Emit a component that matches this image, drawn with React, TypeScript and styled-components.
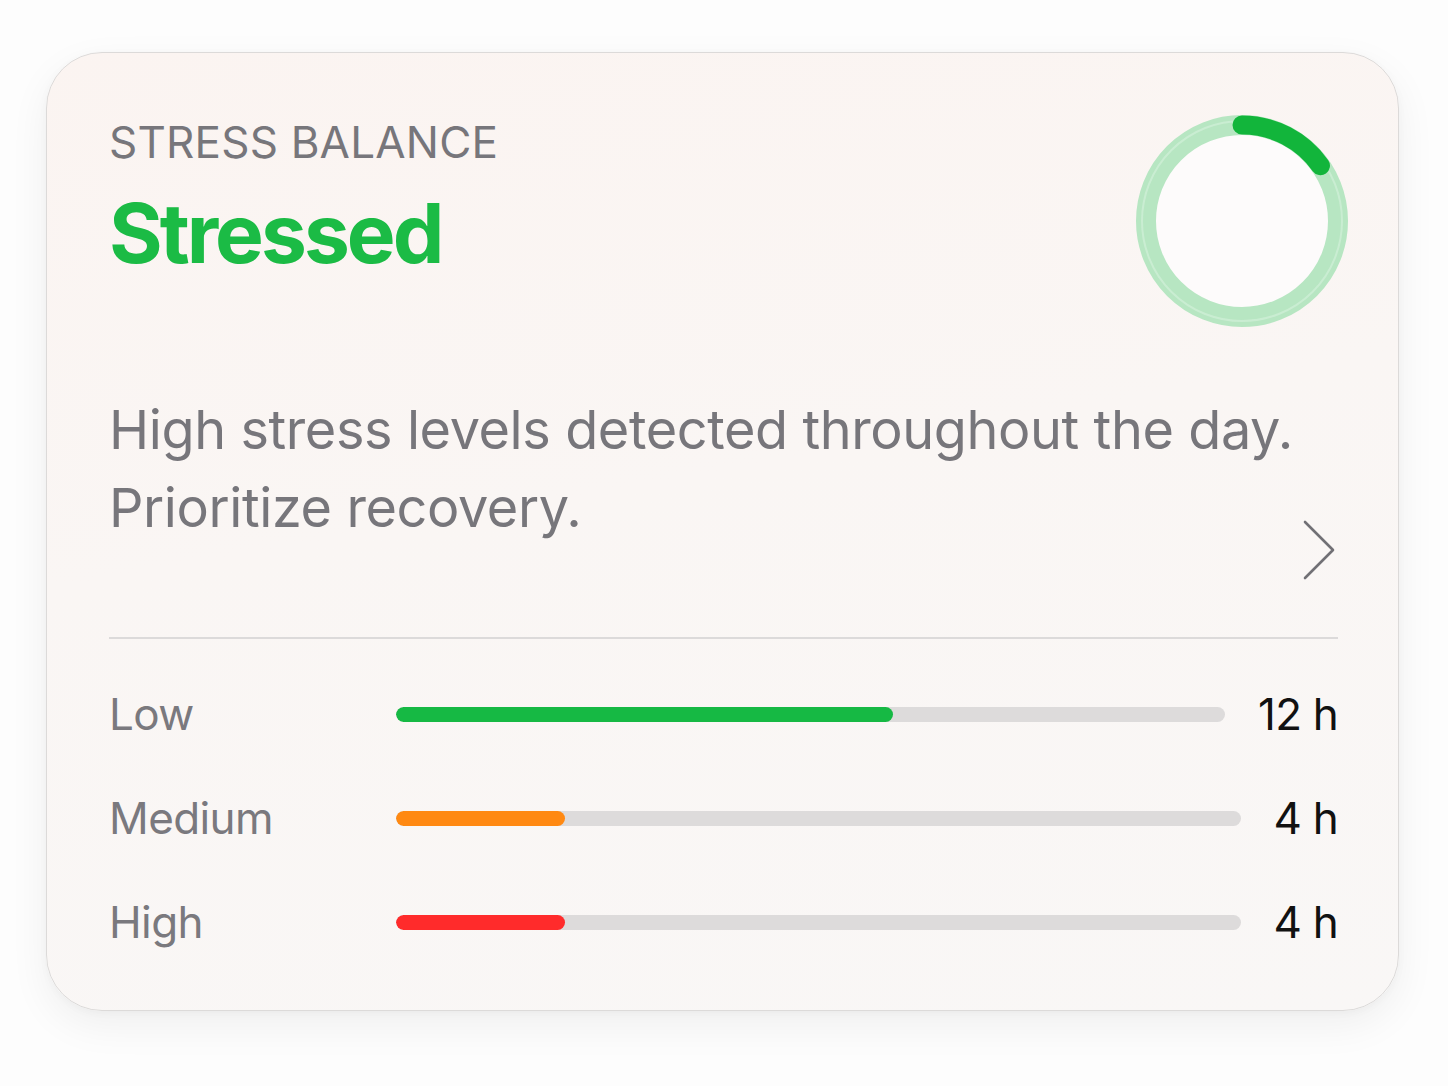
import styled, { createGlobalStyle } from 'styled-components';

const GlobalStyle = createGlobalStyle`
	html, body {
		margin: 0;
		padding: 0;
		background: #fdfdfd;
	}
	body {
		font-family: Inter, 'Noto Sans', 'Liberation Sans', sans-serif;
		-webkit-font-smoothing: antialiased;
	}
`;

type Level = {
	label: string;
	hours: number;
	color: string;
};

const levels: Level[] = [
	{ label: 'Low', hours: 12, color: '#16b944' },
	{ label: 'Medium', hours: 4, color: '#ff8912' },
	{ label: 'High', hours: 4, color: '#ff2b2b' },
];

const TOTAL_HOURS = 20;

function StressRing({ progress }: { progress: number }) {
	const r = 96;
	const c = 2 * Math.PI * r;
	const start = -0.008;
	return (
		<RingSvg width="216" height="216" viewBox="0 0 216 216">
			<circle cx="108" cy="108" r={r} fill="#fdfbfb" stroke="#b7e6c2" strokeWidth="20" />
			<circle cx="108" cy="108" r={r + 4} fill="none" stroke="#d6f2dc" strokeWidth="2" opacity="0.6" />
			<circle
				cx="108"
				cy="108"
				r={r}
				fill="none"
				stroke="#12b53b"
				strokeWidth="19"
				strokeLinecap="round"
				strokeDasharray={`${c * progress} ${c}`}
				strokeDashoffset={-c * start}
				transform="rotate(-90 108 108)"
			/>
		</RingSvg>
	);
}

function Chevron() {
	return (
		<ChevronSvg width="34" height="64" viewBox="0 0 34 64">
			<path d="M3 3 L31 31 L3 59" fill="none" stroke="#717075" strokeWidth="2.6" strokeLinecap="round" strokeLinejoin="round" />
		</ChevronSvg>
	);
}

export default function App() {
	return (
		<>
			<GlobalStyle />
			<Page>
				<Card>
					<Header>
						<TitleBlock>
							<Eyebrow>STRESS BALANCE</Eyebrow>
							<Status>Stressed</Status>
						</TitleBlock>
						<StressRing progress={0.16} />
					</Header>
					<SummaryRow>
						<Summary>
							High stress levels detected throughout the day.
							<br />
							Prioritize recovery.
						</Summary>
						<Chevron />
					</SummaryRow>
					<Divider />
					<Levels>
						{levels.map((l) => (
							<LevelRow key={l.label}>
								<LevelLabel>{l.label}</LevelLabel>
								<Track>
									<Fill $color={l.color} style={{ width: `${(l.hours / TOTAL_HOURS) * 100}%` }} />
								</Track>
								<Hours>{l.hours} h</Hours>
							</LevelRow>
						))}
					</Levels>
				</Card>
			</Page>
		</>
	);
}

const Page = styled.div`
	width: 1448px;
	height: 1086px;
	padding: 52px 0 0 46px;
	box-sizing: border-box;
`;

const Card = styled.div`
	width: 1353px;
	height: 959px;
	box-sizing: border-box;
	border: 1.5px solid #dcdad9;
	border-radius: 56px;
	background: linear-gradient(170deg, #fbf4f1 0%, #faf6f4 45%, #f9f7f6 100%);
	box-shadow: 0 14px 40px rgba(0, 0, 0, 0.06), 0 2px 8px rgba(0, 0, 0, 0.03);
	padding: 60px 60px 0 62px;
	display: flex;
	flex-direction: column;
`;

const Header = styled.div`
	display: flex;
	justify-content: space-between;
	align-items: flex-start;
`;

const TitleBlock = styled.div`
	display: flex;
	flex-direction: column;
	padding-top: 2px;
`;

const Eyebrow = styled.div`
	font-size: 44px;
	line-height: 54px;
	letter-spacing: 0.2px;
	color: #77767b;
	font-weight: 400;
`;

const Status = styled.div`
	margin-top: 18px;
	font-size: 82px;
	line-height: 94px;
	font-weight: 700;
	letter-spacing: -3px;
	color: #1bbb45;
`;

const RingSvg = styled.svg`
	margin-top: 0;
	margin-right: -12px;
	flex-shrink: 0;
`;

const SummaryRow = styled.div`
	display: flex;
	align-items: flex-end;
	justify-content: space-between;
	margin-top: 62px;
`;

const Summary = styled.p`
	margin: 0;
	font-size: 54px;
	line-height: 78px;
	color: #77767b;
	letter-spacing: -0.4px;
`;

const ChevronSvg = styled.svg`
	margin-right: 2px;
	margin-bottom: -36px;
	flex-shrink: 0;
`;

const Divider = styled.div`
	height: 2px;
	background: #dcdada;
	margin-top: 90px;
`;

const Levels = styled.div`
	display: flex;
	flex-direction: column;
	gap: 48px;
	margin-top: 47px;
`;

const LevelRow = styled.div`
	display: flex;
	align-items: center;
	height: 56px;
`;

const LevelLabel = styled.div`
	width: 287px;
	flex-shrink: 0;
	font-size: 44px;
	letter-spacing: -0.6px;
	color: #7a797e;
`;

const Track = styled.div`
	flex: 1;
	height: 15px;
	border-radius: 8px;
	background: #dddbdb;
	overflow: hidden;
`;

const Fill = styled.div<{ $color: string }>`
	height: 100%;
	border-radius: 8px;
	background: ${({ $color }) => $color};
`;

const Hours = styled.div`
	flex-shrink: 0;
	margin-left: 33px;
	font-size: 44px;
	letter-spacing: -0.8px;
	color: #111;
	text-align: right;
`;
